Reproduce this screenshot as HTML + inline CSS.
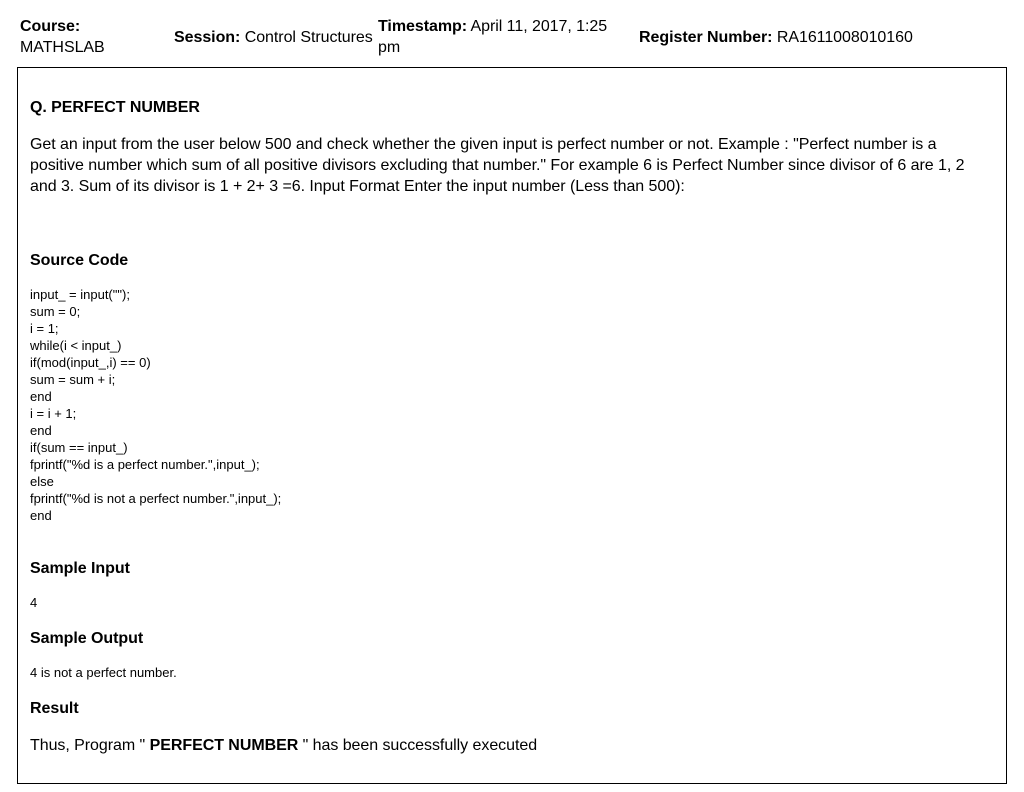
<!DOCTYPE html>
<html><head><meta charset="utf-8"><style>
body{margin:0;width:1024px;height:792px;background:#fff;font-family:"Liberation Sans",sans-serif;color:#000;position:relative;overflow:hidden}
.a{position:absolute;white-space:nowrap}
.h{font-size:16px;line-height:21px;letter-spacing:-0.05px}
.b{font-weight:bold}
.box{position:absolute;left:17px;top:67px;width:988px;height:715px;border:1px solid #000}
.code{position:absolute;left:30px;top:286px;font-size:13px;line-height:17px;white-space:pre}
</style></head><body>
<div class="a h" style="left:20px;top:16px"><b>Course:</b><br>MATHSLAB</div>
<div class="a h" style="left:174px;top:27px"><b>Session:</b> Control Structures</div>
<div class="a h" style="left:378px;top:16px"><b>Timestamp:</b> April 11, 2017, 1:25<br>pm</div>
<div class="a h" style="left:639px;top:27px"><b>Register Number:</b> RA1611008010160</div>
<div class="box"></div>
<div class="a h b" style="left:30px;top:97px">Q. PERFECT NUMBER</div>
<div class="a h" style="left:30px;top:134px;width:960px;white-space:normal">Get an input from the user below 500 and check whether the given input is perfect number or not. Example : "Perfect number is a positive number which sum of all positive divisors excluding that number." For example 6 is Perfect Number since divisor of 6 are 1, 2 and 3. Sum of its divisor is 1 + 2+ 3 =6. Input Format Enter the input number (Less than 500):</div>
<div class="a h b" style="left:30px;top:250px">Source Code</div>
<div class="code">input_ = input("");
sum = 0;
i = 1;
while(i &lt; input_)
if(mod(input_,i) == 0)
sum = sum + i;
end
i = i + 1;
end
if(sum == input_)
fprintf("%d is a perfect number.",input_);
else
fprintf("%d is not a perfect number.",input_);
end</div>
<div class="a h b" style="left:30px;top:558px">Sample Input</div>
<div class="a" style="left:30px;top:594px;font-size:13px;line-height:17px">4</div>
<div class="a h b" style="left:30px;top:628px">Sample Output</div>
<div class="a" style="left:30px;top:664px;font-size:13px;line-height:17px">4 is not a perfect number.</div>
<div class="a h b" style="left:30px;top:698px">Result</div>
<div class="a h" style="left:30px;top:735px">Thus, Program " <b>PERFECT NUMBER</b> " has been successfully executed</div>
</body></html>
